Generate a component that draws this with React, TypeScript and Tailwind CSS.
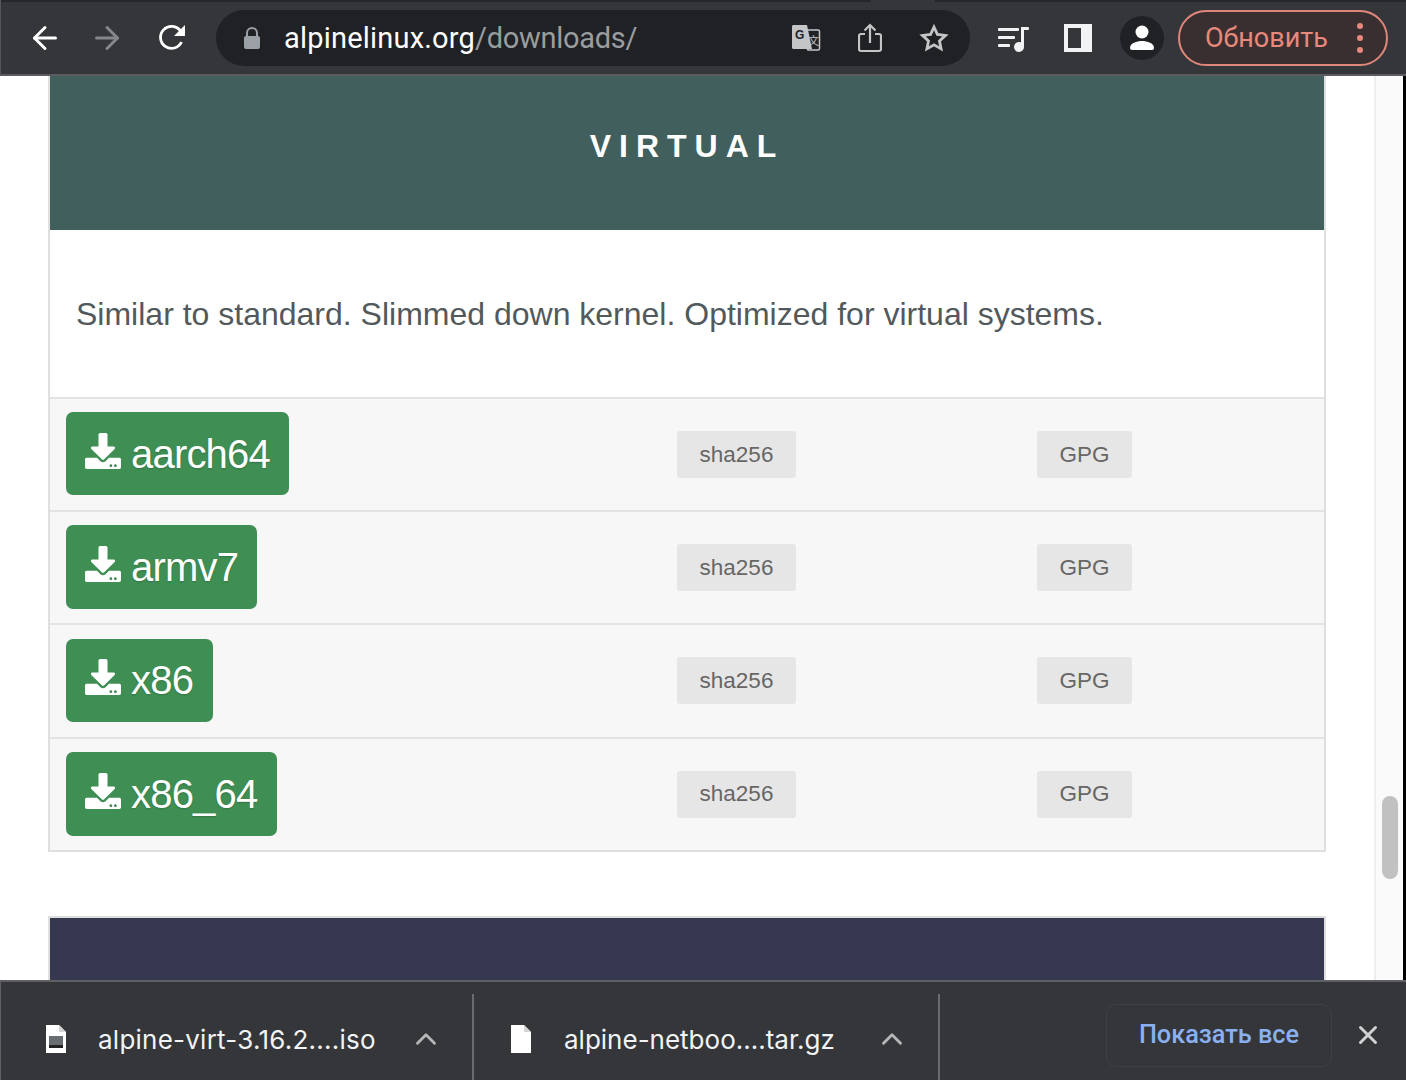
import { ArrowLeft, ArrowRight, ChevronUp, X } from "lucide-react";
import { FaDownload } from "react-icons/fa";

const rows = [
  { name: "aarch64", size: "mb-[2px] w-[223px] h-[83px]" },
  { name: "armv7", size: "mb-[2px] w-[191px] h-[84px]" },
  { name: "x86", size: "mb-[1px] w-[147px] h-[83px]" },
  { name: "x86_64", size: "mb-[1px] w-[211px] h-[84px]" },
];

function Reload() {
  return (
    <svg width="30" height="30" viewBox="0 0 30 30">
      <path d="M24.500 19a11 11 0 1 1-1-11" fill="none" stroke="#fff" strokeWidth="2.800" />
      <path d="M28 2v11H17z" fill="#fff" />
    </svg>
  );
}

function Translate() {
  return (
    <svg width="30" height="28" viewBox="0 0 30 28">
      <path d="M2 1h14l5 24H2a2 2 0 0 1-1-2V3a2 2 0 0 1 1-2z" fill="#c4c5c7" />
      <path d="M15 6h12a1.500 1.500 0 0 1 1.500 1.500v17a1.500 1.500 0 0 1-1.500 1.500H17l-2-3" fill="none" stroke="#c4c5c7" strokeWidth="1.500" />
      <text x="4" y="15" fontSize="12" fontWeight="700" fill="#202124" fontFamily="Liberation Sans, sans-serif">G</text>
      <text x="17" y="21" fontSize="11" fill="#c4c5c7" fontFamily="Noto Sans CJK SC, sans-serif">文</text>
    </svg>
  );
}

function ShareIcon() {
  return (
    <svg width="24" height="30" viewBox="0 0 24 30" fill="none" stroke="#c4c5c7" strokeWidth="2.200">
      <path d="M7 11H3a2 2 0 0 0-2 2v13a2 2 0 0 0 2 2h18a2 2 0 0 0 2-2V13a2 2 0 0 0-2-2h-4" />
      <path d="M12 20V2M6.500 7.500 12 2l5.500 5.500" />
    </svg>
  );
}

function StarIcon() {
  return (
    <svg width="30" height="30" viewBox="0 0 30 30" fill="none" stroke="#c4c5c7" strokeWidth="2.800">
      <path d="M15 4l3.400 7.400 8.100 1-6 5.500 1.600 8L15 21.900 7.900 25.900l1.600-8-6-5.500 8.100-1z" />
    </svg>
  );
}

function MediaIcon() {
  return (
    <svg width="32" height="28" viewBox="0 0 32 28" fill="#f1f3f4">
      <rect x="0" y="4" width="21" height="3" rx="1" />
      <rect x="0" y="12" width="17" height="3" rx="1" />
      <rect x="0" y="20" width="12" height="3" rx="1" />
      <rect x="23" y="3" width="3" height="20" />
      <rect x="23" y="3" width="8" height="3" rx="1" />
      <circle cx="21" cy="23" r="5" />
    </svg>
  );
}

function ProfileIcon() {
  return (
    <div className="flex h-[44px] w-[44px] items-center justify-center rounded-full bg-[#202124]">
      <svg width="24" height="26" viewBox="0 0 24 26" fill="#fff">
        <circle cx="12" cy="7" r="6.500" />
        <path d="M2 25a2 2 0 0 1-2-2c0-5 7-7 12-7s12 2 12 7a2 2 0 0 1-2 2z" />
      </svg>
    </div>
  );
}

function FileIcon({ disk }: { disk?: boolean }) {
  return (
    <svg width="22" height="30" viewBox="0 0 22 30">
      <path d="M1 1h13l7 7v21H1z" fill="#fff" />
      <path d="M14 1l7 7h-7z" fill="#d4d4d4" />
      {disk && <rect x="4" y="12" width="14" height="12" fill="#6a6d6f" />}
      {disk && <rect x="4" y="21" width="14" height="3" fill="#222" />}
    </svg>
  );
}

function Toolbar() {
  return (
    <div className="flex h-[76px] shrink-0 flex-col border-l border-l-[#55565a] bg-[#35363a]">
      <div className="flex h-[2px] bg-[#26272b]">
        <div className="ml-[870px] h-[2px] w-[64px] bg-[#35363a]" />
      </div>
      <div className="flex h-[72px] items-center">
        <div className="flex w-[215px] items-center pl-[26px]">
          <ArrowLeft size={36} strokeWidth={2} className="text-white" />
          <ArrowRight size={36} strokeWidth={2} className="ml-[26px] text-[#85878a]" />
          <div className="ml-[32px]"><Reload /></div>
        </div>
        <div className="flex h-[56px] w-[754px] items-center rounded-full bg-[#202124] pl-[27px]">
          <svg width="18" height="22" viewBox="0 0 18 22" fill="#9aa0a6">
            <path d="M3 9V6a6 6 0 0 1 12 0v3h-2V6a4 4 0 0 0-8 0v3z" />
            <rect x="1" y="9" width="16" height="13" rx="2" />
          </svg>
          <div className="ml-[23px] w-[507px] pt-[2px] text-[29px] text-white">
            <span className="tracking-[0.2px]">alpinelinux.org</span>
            <span className="tracking-[-0.3px] text-[#9a9da0]">/downloads/</span>
          </div>
          <div className="flex w-[30px] justify-center"><Translate /></div>
          <div className="ml-[34px] flex w-[30px] justify-center"><ShareIcon /></div>
          <div className="ml-[34px] flex w-[30px] justify-center"><StarIcon /></div>
        </div>
        <div className="ml-[28px] flex w-[32px]"><MediaIcon /></div>
        <div className="ml-[34px] flex h-[28px] w-[28px] bg-[#f1f3f4] p-[4px] pr-[11px]">
          <div className="w-full bg-[#35363a]" />
        </div>
        <div className="ml-[28px]"><ProfileIcon /></div>
        <div className="ml-[14px] flex h-[56px] w-[210px] items-center rounded-full border-2 border-[#e0877b] bg-[#3a2f30] pl-[25px] text-[27px] text-[#e8897d]">
          Обновить
          <div className="ml-[29px] flex flex-col gap-[6px]">
            <div className="h-[6px] w-[6px] rounded-full bg-[#e8897d]" />
            <div className="h-[6px] w-[6px] rounded-full bg-[#e8897d]" />
            <div className="h-[6px] w-[6px] rounded-full bg-[#e8897d]" />
          </div>
        </div>
      </div>
      <div className="h-[2px] bg-[#5a5b5f]" />
    </div>
  );
}

function Row({ name, size }: { name: string; size: string }) {
  return (
    <div className="grid h-[113.200px] grid-cols-[611px_360px_1fr] items-center border-t-2 border-[#e3e3e3] pl-[16px]">
      <div className={`flex ${size} items-center gap-[10px] rounded-[7px] bg-[#3f8f54] pl-[19px] text-[40px] tracking-[-0.8px] text-white [text-shadow:0_1px_2px_rgba(0,0,0,0.2)]`}>
        <FaDownload size={36} className="mb-[6px]" />
        {name}
      </div>
      <div className="flex h-[47px] w-[119px] items-center justify-center rounded-[3px] bg-[#e6e6e6] text-[22.500px] text-[#666]">sha256</div>
      <div className="flex h-[47px] w-[95px] items-center justify-center rounded-[3px] bg-[#e6e6e6] text-[22.500px] text-[#666]">GPG</div>
    </div>
  );
}

function Page() {
  return (
    <div className="flex min-h-0 flex-1 overflow-hidden bg-white">
      <div className="w-[1374px] pl-[48px] pr-[48px]">
        <div className="border-x-2 border-b-2 border-[#dfdfdf]">
          <div className="flex h-[154px] items-center justify-center bg-[#41605d] pb-[14px] text-[32px] font-bold tracking-[8px] text-white">
            VIRTUAL
          </div>
          <div className="flex h-[167px] items-center bg-white pl-[26px] text-[32px] text-[#52595c]">
            Similar to standard. Slimmed down kernel. Optimized for virtual systems.
          </div>
          <div className="bg-[#f7f7f7]">
            {rows.map((r) => (
              <Row key={r.name} {...r} />
            ))}
          </div>
        </div>
        <div className="mt-[64px] h-[80px] border-x-2 border-t-2 border-[#dfdfdf] bg-[#363850]" />
      </div>
      <div className="flex w-[32px] border-l-2 border-[#eeeeee] bg-[#fafafa]">
        <div className="w-[27px] pl-[6px] pt-[720px]">
          <div className="h-[83px] w-[16px] rounded-full bg-[#c1c1c1]" />
        </div>
        <div className="w-[3px] bg-black" />
      </div>
    </div>
  );
}

function DownloadBar() {
  return (
    <div className="flex h-[100px] shrink-0 border-t-2 border-l border-[#5f6064] bg-[#35363a] text-[#f1f3f4]">
      <div className="flex w-[471px] items-center pl-[44px] pt-[16px]">
        <FileIcon disk />
        <span className="ml-[31px] w-[311px] font-['Inter',sans-serif] text-[26px] tracking-[0.24px]">alpine-virt-3.16.2....iso</span>
        <ChevronUp size={34} strokeWidth={2} className="text-[#b5b6b8]" />
      </div>
      <div className="mt-[12px] w-[2px] bg-[#6a6b6f]" />
      <div className="flex w-[464px] items-center pl-[36px] pt-[16px]">
        <FileIcon />
        <span className="ml-[32px] w-[311px] font-['Inter',sans-serif] text-[26px]">alpine-netboo....tar.gz</span>
        <ChevronUp size={34} strokeWidth={2} className="text-[#b5b6b8]" />
      </div>
      <div className="mt-[12px] w-[2px] bg-[#6a6b6f]" />
      <div className="flex flex-1 items-center pl-[166px] pt-[8px]">
        <div className="flex h-[63px] w-[226px] items-center justify-center rounded-[10px] border border-[#3f4044] text-[25.300px] font-medium text-[#8ab0ef]">
          Показать все
        </div>
        <X size={30} strokeWidth={2.400} className="ml-[21px] text-[#d0d1d2]" />
      </div>
    </div>
  );
}

export default function App() {
  return (
    <div className="flex h-[1080px] w-full flex-col overflow-hidden font-['Liberation_Sans',sans-serif]">
      <div className="font-['Roboto',sans-serif]"><Toolbar /></div>
      <Page />
      <div className="font-['Roboto',sans-serif]"><DownloadBar /></div>
    </div>
  );
}
